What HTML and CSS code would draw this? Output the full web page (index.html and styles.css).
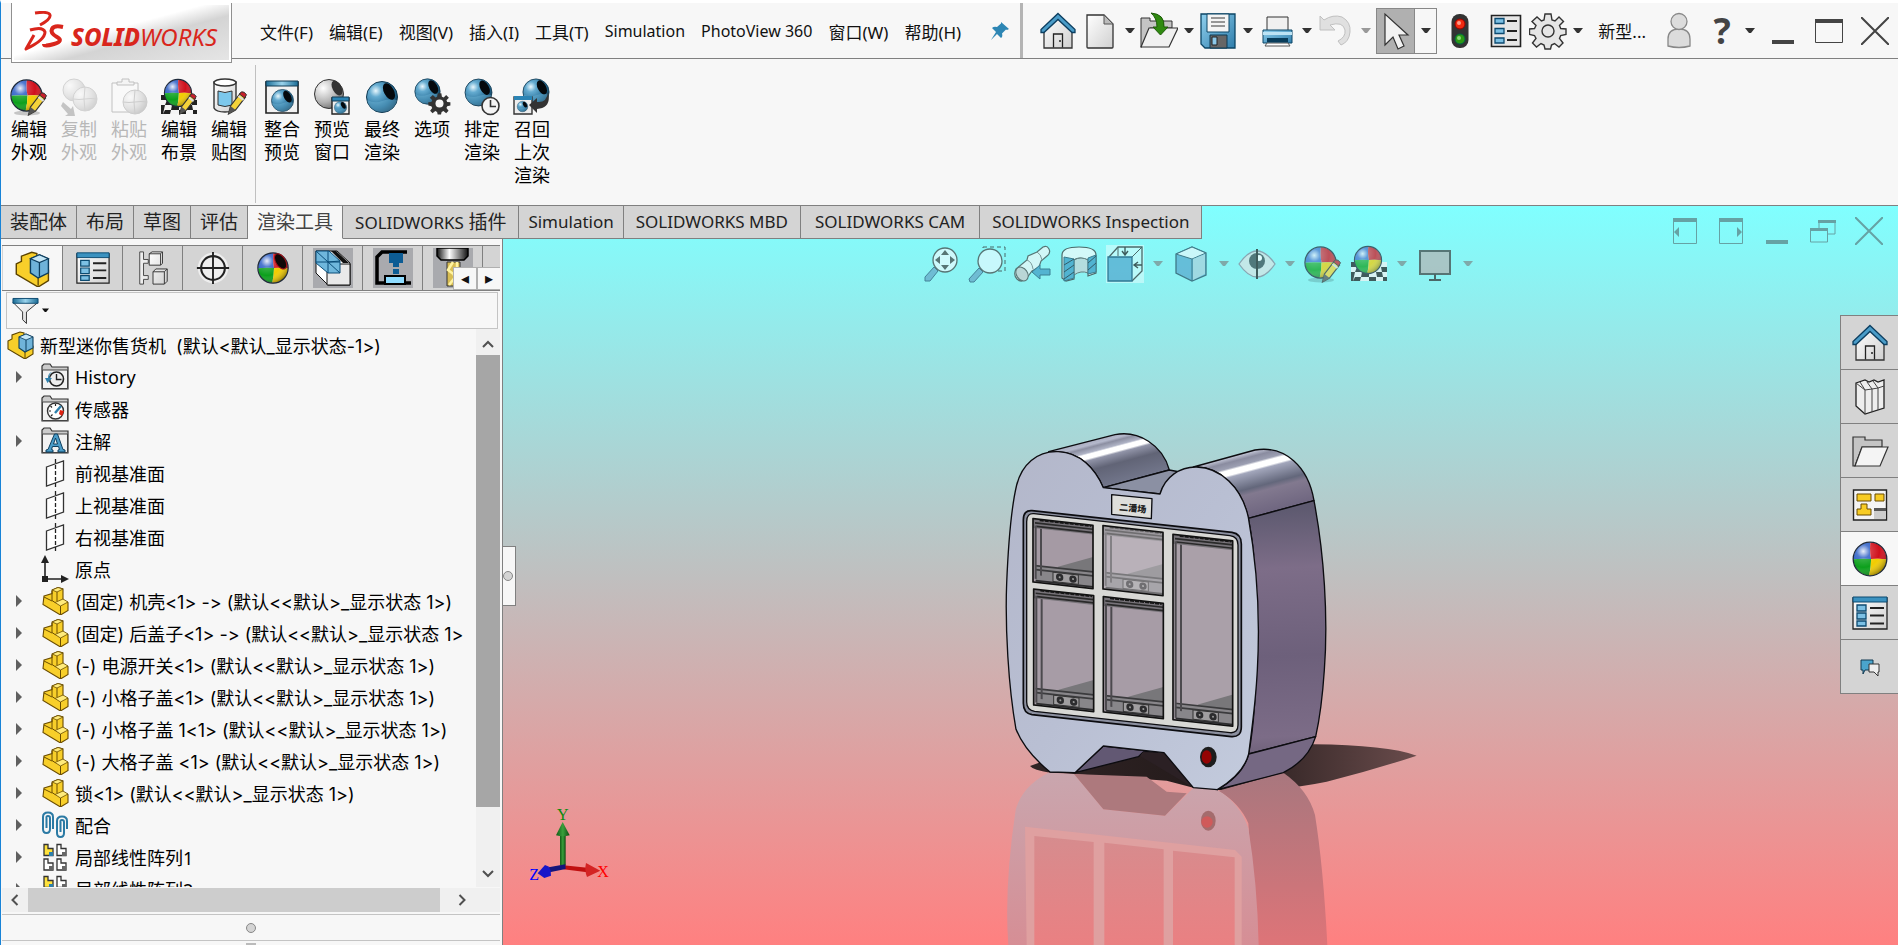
FILE: index.html
```
<!DOCTYPE html>
<html lang="zh-CN">
<head>
<meta charset="utf-8">
<title>SOLIDWORKS</title>
<link rel="stylesheet" href="styles.css">
</head>
<body>
<svg class="defs" aria-hidden="true">
  <defs>
    <linearGradient id="g-paper" x1="0" y1="0" x2="1" y2="1"><stop offset="0" stop-color="#fff"/><stop offset="1" stop-color="#d0d0d0"/></linearGradient>
    <linearGradient id="g-blue" x1="0" y1="0" x2="1" y2="1"><stop offset="0" stop-color="#8fd0ee"/><stop offset="1" stop-color="#2f7dab"/></linearGradient>
    <linearGradient id="g-bar" x1="0" y1="0" x2="1" y2="0"><stop offset="0" stop-color="#1b6d96"/><stop offset=".5" stop-color="#9ad3ec"/><stop offset="1" stop-color="#1b6d96"/></linearGradient>
    <radialGradient id="g-shine" cx=".3" cy=".27" r=".8"><stop offset="0" stop-color="#fff" stop-opacity=".9"/><stop offset=".25" stop-color="#fff" stop-opacity=".2"/><stop offset=".6" stop-color="#fff" stop-opacity="0"/><stop offset="1" stop-color="#000" stop-opacity=".4"/></radialGradient>
    <radialGradient id="g-steel" cx=".3" cy=".3" r=".8"><stop offset="0" stop-color="#e8f7fd"/><stop offset=".25" stop-color="#64abd0"/><stop offset=".7" stop-color="#286f98"/><stop offset="1" stop-color="#123f5b"/></radialGradient>
    <radialGradient id="g-ball" cx=".3" cy=".3" r=".8"><stop offset="0" stop-color="#fff"/><stop offset=".6" stop-color="#b4b4b4"/><stop offset="1" stop-color="#6a6a6a"/></radialGradient>
    <linearGradient id="g-cyl" x1="0" y1="0" x2="1" y2="0"><stop offset="0" stop-color="#111"/><stop offset=".4" stop-color="#fff"/><stop offset="1" stop-color="#111"/></linearGradient>
    <clipPath id="c-ball"><circle cx="19" cy="19" r="15"/></clipPath>
  </defs>
  <symbol id="sphere" viewBox="0 0 38 38">
    <g clip-path="url(#c-ball)"><path d="M0 0h20q-2 10 0 19Q9 18 0 20z" fill="#2458c4"/><path d="M20 0h18v20q-9-2-18-1-2-9 0-19z" fill="#d0101c"/><path d="M0 20q9-2 20-1 0 10-3 19H0z" fill="#0ca01c"/><path d="M20 19q9-1 18 1v18H17q3-9 3-19z" fill="#f2cc00"/></g>
    <circle cx="19" cy="19" r="15.200" fill="url(#g-shine)" stroke="#1f2a3a" stroke-width="1.200"/>
  </symbol>
  <symbol id="steel" viewBox="0 0 38 38">
    <circle cx="19" cy="19" r="15.500" fill="url(#g-steel)" stroke="#123a52"/><path d="M4 22q8 4 15 1t15-1q-3 12-15 12T4 22z" fill="#7cc0e0" opacity=".35"/><ellipse cx="26" cy="13.500" rx="5" ry="9" transform="rotate(-28 26 13.500)" fill="#05090d"/>
  </symbol>
  <symbol id="pencil" viewBox="0 0 20 24"><path d="M1 23l2-8L13 2l5 4L8 19z" fill="#f4d33a" stroke="#333" stroke-width="1.200"/><path d="M12 3l2-2.200q3-.5 5 3L17 7z" fill="#c8202a" stroke="#333"/><path d="M11 5l5 4" stroke="#ddd" stroke-width="2"/><path d="M1 23l2-8 5 4z" fill="#555"/></symbol>
  <symbol id="edit-look" viewBox="0 0 38 38"><ellipse cx="17" cy="35" rx="13" ry="2.500" fill="#000" opacity=".2"/><use href="#sphere" x="-3" y="-2" width="39" height="39"/><use href="#pencil" x="17" y="14" width="21" height="24"/></symbol>
  <symbol id="checker" viewBox="0 0 38 20"><path d="M1 0h36v19H1z" fill="#f4f4f4"/><path d="M1 0h6v5H1zM12 0h6v5h-6zM24 0h6v5h-6zM7 5h6l-1 5H5zM19 5h7v5h-7zM31 5h6v5h-5zM1 10h4l-2 9H1zM12 10h7v5h-8zM26 10h6l1 5h-6zM5 15h6l-1 4H3zM19 15h7v4h-7zM33 15h4v4h-4z" fill="#222"/></symbol>
  <symbol id="scene" viewBox="0 0 38 38"><use href="#checker" x="0" y="17" width="38" height="20"/><use href="#sphere" x="1" y="-2" width="34" height="34"/></symbol>
  <symbol id="edit-scene" viewBox="0 0 38 38"><use href="#scene" width="38" height="38"/><use href="#pencil" x="18" y="15" width="20" height="22"/></symbol>
  <symbol id="decal" viewBox="0 0 38 38"><path d="M4 4v26q2 4 11 4t11-4V4z" fill="url(#g-paper)" stroke="#333" stroke-width="1.400"/><ellipse cx="15" cy="4.500" rx="11" ry="3.500" fill="#fff" stroke="#333" stroke-width="1.400"/><path d="M8 13q7 3 14 0v14q-7 3-14 0z" fill="#7cc8ec" stroke="#333"/><use href="#pencil" x="17" y="13" width="21" height="24"/></symbol>
  <symbol id="copy-look" viewBox="0 0 38 38"><g opacity=".28"><circle cx="14" cy="12" r="11" fill="url(#g-ball)" stroke="#777"/><circle cx="25" cy="21" r="12" fill="url(#g-ball)" stroke="#777"/><path d="M13 21q6 1 12 0t12 0M25 9q-2 12 0 24" stroke="#777" fill="none"/></g><path d="M3 24l8 7 2-3 2 10H5l3-2-7-8z" fill="#c4c4c4"/></symbol>
  <symbol id="paste-look" viewBox="0 0 38 38"><g opacity=".33"><path d="M2 5h26v29H2z" fill="#fff" stroke="#555"/><path d="M7 7V4h5V1h7v3h5v3z" fill="#eee" stroke="#555"/><circle cx="25" cy="24" r="12" fill="url(#g-ball)" stroke="#777"/><path d="M13 24q6 1 12 0t12 0M25 12q-2 12 0 24" stroke="#777" fill="none"/></g></symbol>
  <symbol id="int-preview" viewBox="0 0 38 38"><path d="M3 4h32v31H3z" fill="#f2f2f2" stroke="#222" stroke-width="1.600"/><path d="M3 3h32v5H3z" fill="url(#g-bar)" stroke="#123a52"/><use href="#steel" x="6" y="9" width="27" height="27"/></symbol>
  <symbol id="win-preview" viewBox="0 0 38 38"><circle cx="16" cy="16" r="14.500" fill="url(#g-ball)" stroke="#333"/><ellipse cx="24" cy="10" rx="4.500" ry="8" transform="rotate(-28 24 10)" fill="#333"/><path d="M19 20h17v16H19z" fill="#eee" stroke="#222" stroke-width="1.400"/><path d="M19 19h17v4H19z" fill="#2b84b4" stroke="#123a52"/><use href="#steel" x="20" y="22" width="15" height="15"/></symbol>
  <symbol id="gear" viewBox="0 0 38 38"><path d="M16 2h6l1 6 3 1 4-4 4.500 4.500-4 4 1.200 3 5.300.5v5.500l-5.300 1-1.200 3 3.500 4.500-4 4-4.500-3.500-3 1.500-1 4h-5.500l-1-4-3-1.500-4.500 3.500-4-4 3.500-4.500-1.500-3-5-1V17l5-.5 1.500-3-4-4L8 5l4.500 4 2.500-1z"/><circle cx="19" cy="19" r="6"/></symbol>
  <symbol id="options" viewBox="0 0 38 38"><use href="#steel" x="-1" y="-2" width="31" height="31"/><use href="#gear" x="15" y="14" width="23" height="23" fill="#333"/><circle cx="26.500" cy="25.500" r="4" fill="#f7f7f7"/></symbol>
  <symbol id="schedule" viewBox="0 0 38 38"><use href="#steel" x="-1" y="-2" width="33" height="33"/><circle cx="27.500" cy="28" r="8.500" fill="#f4f4f4" stroke="#333" stroke-width="1.600"/><path d="M27.500 22v6.500H33" fill="none" stroke="#333" stroke-width="1.600"/></symbol>
  <symbol id="recall" viewBox="0 0 38 38"><use href="#steel" x="7" y="-2" width="32" height="32"/><path d="M1 19h18v17H1z" fill="#eee" stroke="#333" stroke-width="1.400"/><path d="M1 18h18v4H1z" fill="#2b84b4"/><use href="#steel" x="3" y="22" width="13" height="13"/><path d="M16 27l8-7v4q10 1 11-10 4 16-11 17v4z" fill="#333"/></symbol>
  <symbol id="home" viewBox="0 0 38 38"><path d="M5 16L19 3l14 14v19H5z" fill="url(#g-paper)" stroke="#333" stroke-width="1.300"/><path d="M14.500 35.500V22h9v13.500M20 29h2" fill="none" stroke="#222" stroke-width="1.300"/><path d="M19 1.500L36 17.500v3h-3L19 7.500 5 20.500H2v-3z" fill="#4a9cc8" stroke="#0c3e60" stroke-width="1.300"/></symbol>
  <symbol id="newdoc" viewBox="0 0 38 38"><path d="M6 3h17l9 9v23q0 1-1 1H7q-1 0-1-1z" fill="url(#g-paper)" stroke="#333" stroke-width="1.300"/><path d="M23 3v9h9z" fill="#bbb" stroke="#555"/></symbol>
  <symbol id="open" viewBox="0 0 38 38"><path d="M1 35V6h9v3h22v7H10L2 35z" fill="#c4c4c4" stroke="#333"/><path d="M9 16h29l-9 19H1z" fill="#f0f0f0" stroke="#333" stroke-width="1.200"/><path d="M11 1q14 1 13 14h4l-7.500 8-7.500-8h4q0-9-6-14z" fill="#2f8a10" stroke="#1c5a08"/></symbol>
  <symbol id="save" viewBox="0 0 38 38"><path d="M2 2h34v34H6l-4-4z" fill="url(#g-blue)" stroke="#0c4666" stroke-width="1.300"/><path d="M8 2h22v18H8z" fill="#f4f4f4" stroke="#0c4666"/><path d="M12 6h14M12 10h14M12 14h14" stroke="#777" stroke-width="1.300"/><path d="M11 23h17v13H11z" fill="#666" stroke="#0c3a54"/><path d="M13 25h5v8h-5z" fill="#8cc8e8" stroke="#222"/></symbol>
  <symbol id="print" viewBox="0 0 38 38"><path d="M9 5h21v15H9z" fill="#f0f0f0" stroke="#333"/><path d="M5 18h29v13H5z" fill="url(#g-blue)" stroke="#0c4666"/><path d="M5 20h29v3H5z" fill="#bde3f4"/><path d="M9 26h21v4H9z" fill="#083c5a"/><path d="M9 31h21l2 3H7z" fill="#fff" stroke="#555"/></symbol>
  <symbol id="undo" viewBox="0 0 38 38"><path d="M3 4l4 4Q16 2 25 5q9 5 8 15-1 10-9 13l-3-4q8-4 7-11-2-9-15-5l5 5H3z" fill="#e0e0e0" stroke="#c0c0c0"/></symbol>
  <symbol id="cursor" viewBox="0 0 38 38"><path d="M8 2v31l8-8 5 12 6-3-5-11h9z" fill="#f2f2f2" stroke="#333" stroke-width="1.200"/></symbol>
  <symbol id="traffic" viewBox="0 0 38 38"><rect x="10.500" y="2" width="17" height="34" rx="8" fill="#333"/><circle cx="19" cy="12" r="5" fill="#f02a10" stroke="#900"/><circle cx="19" cy="27" r="5" fill="#2c9a14" stroke="#064"/><circle cx="18" cy="11" r="2" fill="#ff9a88"/><circle cx="18" cy="26" r="2" fill="#8ad878"/></symbol>
  <symbol id="props" viewBox="0 0 38 38"><path d="M4.500 3.500h29v31h-29z" fill="#e6e6e6" stroke="#222" stroke-width="1.600"/><path d="M8 6.500h9v5H8zM8 16.500h9v5H8zM8 26h9v5H8z" fill="#7cc0e4" stroke="#0c4a70" stroke-width="1.300"/><path d="M20 9h10M20 19h10M20 28h10" stroke="#222" stroke-width="2"/></symbol>
  <symbol id="user" viewBox="0 0 38 38"><path d="M8 34V27q0-10 11-10t11 10v7q-11 3-22 0z" fill="#dcdcdc" stroke="#888" stroke-width="1.300"/><circle cx="19" cy="9.500" r="8" fill="#dcdcdc" stroke="#888" stroke-width="1.300"/></symbol>
  <symbol id="pin" viewBox="0 0 20 20"><path d="M11 1l8 7-2 1-1-.5-4 4q1 3-1 4.500l-4-4-6 6 5-8-4-4q2-2 5-1l4-3.500z" fill="#2d86b4"/></symbol>
  <symbol id="part" viewBox="0 0 28 28"><path d="M3 9l8-2.500V3l6-2.500L22 2v11l5 2.500v8L19.500 28 2 17.500z" fill="#f8cf2a" stroke="#6a4c00" stroke-width="1.100"/><path d="M11 3l5 2 6-3-5-1.500z" fill="#ffeb7c" stroke="#6a4c00" stroke-width=".8"/><path d="M14 15.500L22 12l5 3-7.500 4z" fill="#ffeb7c" stroke="#6a4c00" stroke-width=".8"/><path d="M11 4v9.500l3 2M16 5v9M3 10l8 4M19.500 19v9" fill="none" stroke="#6a4c00"/></symbol>
  <symbol id="asm" viewBox="0 0 28 28"><path d="M1 10l4-2V4l8-3 4 1v9l9 4v8l-8 5L1 18z" fill="#f8cf2a" stroke="#5c4400" stroke-width="1.100"/><path d="M18 19v8" stroke="#5c4400"/><path d="M12 6l7-3 7 3v11l-8 4-6-4z" fill="#6fb3d9" stroke="#0d3e5e" stroke-width="1.100"/><path d="M12 6l7 3 7-3-7-3z" fill="#c4e6f6" stroke="#0d3e5e" stroke-width=".8"/><path d="M19 9v11" stroke="#0d3e5e"/></symbol>
  <symbol id="window-list" viewBox="0 0 38 38"><path d="M2 4h34v31H2z" fill="url(#g-paper)" stroke="#222" stroke-width="1.300"/><path d="M2 3h34v5H2z" fill="#3b92c0" stroke="#0c4a70"/><path d="M6 11h9v6H6zM6 19h9v6H6zM6 27h9v5H6z" fill="#7cc0e4" stroke="#0c4a70" stroke-width="1.300"/><path d="M19 14h14M19 21.500h14M19 29.500h14" stroke="#222" stroke-width="2"/></symbol>
  <symbol id="config" viewBox="0 0 38 38"><path d="M5 2h4v8h5v4H9v13h5v4H9v5H5z" fill="#eee" stroke="#444"/><path d="M15 4l3-2h11v12l-2 2H15zM19 23l3-3h12v13l-3 3H19z" fill="url(#g-paper)" stroke="#333"/><path d="M15 4h12v12M27 4l2-2M19 23h12v13M31 23l3-3" stroke="#333" fill="none"/></symbol>
  <symbol id="target" viewBox="0 0 38 38"><circle cx="19" cy="19" r="16" fill="#eee"/><circle cx="19" cy="19" r="12.500" fill="none" stroke="#222" stroke-width="2.200"/><path d="M19 2v34M2 19h34" stroke="#222" stroke-width="2"/></symbol>
  <symbol id="display-mgr" viewBox="0 0 38 38"><use href="#sphere" x="-1" y="-1" width="40" height="40"/><ellipse cx="27" cy="12" rx="5" ry="9" transform="rotate(-32 27 12)" fill="#100808" stroke="#a01018"/></symbol>
  <symbol id="block" viewBox="0 0 40 40"><path d="M0 0h40v40H0z" fill="#a9aaae"/><path d="M3 3h21l13 12v22H15L3 25z" fill="#fff" stroke="#111"/><path d="M14 16h23v21H14z" fill="#e9e9e9" stroke="#111"/><path d="M18 3l5 0 13 12h-6z" fill="#111"/><path d="M3 3h13l11 10v12H15L3 15z" fill="#6fb7dc" stroke="#0a4d78"/><path d="M3 3l24 22M15 3v22M3 14h24M15 14l12-1" stroke="#0a4d78"/></symbol>
  <symbol id="clamp" viewBox="0 0 40 40"><path d="M0 0h40v40H0z" fill="#a9aaae"/><path d="M34 4H9L4 9v26h34" fill="none" stroke="#000" stroke-width="3.500"/><path d="M16 5h14v10h-4v4h-6v-4h-4zM20 21h6v5h-6z" fill="#0d5c94"/><path d="M12 28h20v8H12z" fill="#8fdcff" stroke="#000" stroke-width="2"/></symbol>
  <symbol id="mill" viewBox="0 0 40 40"><path d="M0 0h40v40H0z" fill="#a9aaae"/><path d="M4 0h31v8l-4 4H8L4 8z" fill="url(#g-cyl)" stroke="#000" stroke-width="1.500"/><path d="M14 14h13v24H14z" fill="#d8bd54" stroke="#333"/><path d="M20 14l-5 8 8 6-7 9M24 14v8l-3 5 5 5" fill="none" stroke="#fff3a0" stroke-width="2.500"/></symbol>
  <symbol id="funnel" viewBox="0 0 28 28"><path d="M1 5l10 10v8l4 4V15L27 5z" fill="url(#g-paper)" stroke="#333"/><path d="M1 1h26v5H1z" fill="url(#g-bar)" stroke="#0c4a70"/></symbol>
  <symbol id="folder" viewBox="0 0 28 28"><path d="M1 26V3l2-2h6l2 3h16v22z" fill="#ccc" stroke="#333" stroke-width="1.200"/><path d="M1.500 7h25v18.500h-25z" fill="#f2f2f2" stroke="#444"/></symbol>
  <symbol id="history" viewBox="0 0 28 28"><use href="#folder" width="28" height="28"/><circle cx="15.500" cy="16" r="7" fill="#eee" stroke="#222" stroke-width="1.600"/><path d="M15.500 11v5.500h5" fill="none" stroke="#222" stroke-width="1.400"/><path d="M11 9q-4 3-2 6h2l-4.500 5L4 15h3q0-5 4-6z" fill="#2e80ac"/></symbol>
  <symbol id="sensor" viewBox="0 0 28 28"><use href="#folder" width="28" height="28"/><circle cx="14.500" cy="16" r="8" fill="#fff" stroke="#333" stroke-width="1.400"/><path d="M19 15l4 1-2 5-3-2z" fill="#e02010"/><path d="M14 18l6-7" stroke="#2e80ac" stroke-width="2.400"/><path d="M8 16h2M14.500 9v2M9.500 11l1.500 1.500M10 21l1.500-1.500" stroke="#222" stroke-width="1.200"/></symbol>
  <symbol id="notes" viewBox="0 0 28 28"><use href="#folder" width="28" height="28"/><path d="M5 25v-2l2-.500L13.500 7h3L22 22.500l2 .500v2h-7v-2l1.500-.500-1-3h-6l-1 3 1.500.500v2zM12.500 17h4l-2-6z" fill="#4a9cc8" stroke="#0d3e5e"/></symbol>
  <symbol id="plane" viewBox="0 0 28 28"><path d="M5.500 8l17-6v19l-17 6z" fill="#fff" stroke="#333" stroke-width="1.300"/><path d="M14.500 0v28" stroke="#222" stroke-width="1.300" stroke-dasharray="4 2"/></symbol>
  <symbol id="origin" viewBox="0 0 28 28"><path d="M4 4v20h18" fill="none" stroke="#222" stroke-width="1.600"/><path d="M0 8l4-8 4 8zM20 20l8 4-8 4zM1 21h6v6H1z" fill="#222"/></symbol>
  <symbol id="mates" viewBox="0 0 28 28"><g fill="none" stroke="#2b7aa4" stroke-width="2"><path d="M2 9v9q0 4 3.500 4T9 18V7q0-2-2-2T5.500 7v10M2 9V6q0-4.500 5-4.500T12 6v12"/><path d="M16 13v9q0 4 3.500 4t3.500-4V11q0-2-2-2t-1.500 2v10M16 13v-3q0-4.500 5-4.500t5 4.500v8"/></g></symbol>
  <symbol id="pattern" viewBox="0 0 28 28"><g stroke="#333" fill="#fff" stroke-width="1.300"><path d="M3 1.500h4v4h5v7H3z" fill="#ffe23c"/><path d="M16 1.500h4v4h5v7h-9zM3 16h4v4h5v7H3zM16 16h4v4h5v7h-9z"/></g><path d="M8 9h4v4H8z" fill="#2e80ac"/><path d="M21 9h4v4h-4zM8 23h4v4H8zM21 23h4v4h-4z" fill="#666"/></symbol>
  <symbol id="zoom-fit" viewBox="0 0 38 38"><path d="M3 32l9-10 4 4-8 10H3z" fill="#64a8c8" stroke="#2a5a78"/><circle cx="23" cy="15" r="12" fill="#e8fbff" stroke="#444" stroke-width="1.300"/><path d="M23 5l4 5h-8zM23 25l4-5h-8zM13 15l5-4v8zM33 15l-5-4v8z" fill="#444"/></symbol>
  <symbol id="zoom-area" viewBox="0 0 38 38"><path d="M15 2h22v24H15z" fill="none" stroke="#333" stroke-dasharray="4 3"/><path d="M1 34l10-11 4 4-9 10H2z" fill="#64a8c8" stroke="#2a5a78"/><circle cx="22" cy="16" r="12" fill="#dffaff" stroke="#444" stroke-width="1.300"/></symbol>
  <symbol id="prev-view" viewBox="0 0 38 38"><path d="M2 24l11-9 1-4 9-4 6-5q4-2 6 2t-2 7l-6 5-2 6-7 4-6 8q-5 4-9 0t-1-10z" fill="#eef8f8" stroke="#444" stroke-width="1.200"/><path d="M13 15q5 2 6 9M23 7q4 2 5 8" fill="none" stroke="#777"/><ellipse cx="8" cy="29" rx="5.500" ry="7.500" transform="rotate(-35 8 29)" fill="#ccc" stroke="#444"/><path d="M18 27l8-7v4h10v6H26v4z" fill="#3f9cc4" stroke="#1c5470"/></symbol>
  <symbol id="section" viewBox="0 0 38 38"><path d="M2 10q0-8 17-8t17 8v18l-8 3V15q-9-4-14 0v19l-8 2-4-3z" fill="#f0fafa" stroke="#333" stroke-width="1.200"/><path d="M14 15q7-4 14 0v13q-7-3-14 2z" fill="#c4d4d6" stroke="#555"/><path d="M4 12l10 2v19l-10 3zM28 13l8-3v17l-8 2z" fill="#3c9bc4" stroke="#1d4e66"/><path d="M4 20l10-6M4 27l10-7M4 34l10-7M28 18l8-7M28 25l8-7" stroke="#123" /></symbol>
  <symbol id="orient" viewBox="0 0 38 38"><path d="M0 0h38v38H0z" fill="#e8ffff" opacity=".7"/><path d="M3 12L12 2h24v24L26 36" fill="none" stroke="#333" stroke-width="1.300"/><path d="M26 12L36 2M12 2v9" stroke="#333"/><path d="M2 12h24v24H2z" fill="#54a8cf" stroke="#0c4a70" stroke-width="1.300"/><path d="M19 2v7m-3-3l3 4 3-4M36 20h-7m3-3l-4 3 4 3" stroke="#222" stroke-width="1.400" fill="none"/></symbol>
  <symbol id="cube" viewBox="0 0 38 38"><path d="M4 9l16-7 14 6v22l-14 6-16-8z" fill="#58a9cf" stroke="#234c60" stroke-width="1.300"/><path d="M4 9l16 5 14-6-14-6z" fill="#e4f7fb" stroke="#234c60"/><path d="M20 14v22" stroke="#234c60"/><path d="M21 14l12-5v20l-12 6z" fill="#a8d0dc"/></symbol>
  <symbol id="eye" viewBox="0 0 38 38"><path d="M1 19Q10 6 19 6t18 13Q28 32 19 32T1 19z" fill="#d8e4e4" stroke="#889" stroke-width="1.300"/><circle cx="19" cy="16" r="8" fill="#3b4a4e"/><circle cx="21" cy="13" r="3" fill="#fff"/><path d="M19 4v30" stroke="#222" stroke-width="2"/></symbol>
  <symbol id="monitor" viewBox="0 0 38 38"><path d="M4 6h30v23H4z" fill="#b4b4b4" stroke="#444" stroke-width="2"/><path d="M19 29v5M13 35h12" stroke="#333" stroke-width="2"/></symbol>
  <symbol id="books" viewBox="0 0 38 38"><path d="M5 5l9-3 4 2 5-2 4 2 6-2v28l-19 6L5 28z" fill="#eee" stroke="#222" stroke-width="1.300"/><path d="M5 5l9 7v24M14 12l7-1 0 23M14 12L9 4M21 11l6-1v22M21 11l-5-7M27 10l6-2M27 10l-5-7" stroke="#444" fill="none"/></symbol>
  <symbol id="files" viewBox="0 0 38 38"><path d="M2 34V5h12v3h17v7H11L4 34z" fill="#c4c4c4" stroke="#333" stroke-width="1.200"/><path d="M11 15h26l-8 19H4z" fill="#f4f4f4" stroke="#333" stroke-width="1.200"/></symbol>
  <symbol id="palette" viewBox="0 0 38 38"><path d="M2.500 4h33v30h-33z" fill="#f4f4f4" stroke="#222" stroke-width="1.400"/><path d="M6 8h14v7H6zM24 8h9v7h-9zM6 29v-6h4v-5h6v5h4v6z" fill="#f7cc24" stroke="#6a4c00"/><path d="M23 23h12v10H23z" fill="#ccc"/><path d="M23 22h12v3H23z" fill="#555"/></symbol>
  <symbol id="chat" viewBox="0 0 38 38"><path d="M10 12h12v10h-8l-2 4v-4h-2z" fill="#4aa4cc" stroke="#123a52"/><path d="M18 16h10v8h-1v4l-4-4h-5z" fill="#eee" stroke="#333"/></symbol>
  <symbol id="caret" viewBox="0 0 10 6"><path d="M0 0h10L6 5H4z" fill="currentColor"/></symbol>
  <symbol id="close" viewBox="0 0 28 28"><path d="M0 0l28 28M28 0L0 28" stroke="currentColor" stroke-width="2"/></symbol>
</svg>

<div class="app">
  <header class="topbar">
    <div class="brand">
      <svg class="brand-mark" viewBox="0 0 42 40" aria-hidden="true"><g fill="none" stroke="#d9261c" stroke-linejoin="round"><path d="M13 2q14-2 15 2t-10 10" stroke-width="3"/><path d="M8 19q13-4 15 2 0 8-19 17l8-14" stroke-width="3"/><path d="M41 16q-9-2-11 2t5 8-3 7-10 0" stroke-width="4"/></g></svg>
      <span class="brand-name"><b>SOLID</b>WORKS</span>
    </div>
    <nav class="menu" aria-label="主菜单">
      <button>文件(F)</button><button>编辑(E)</button><button>视图(V)</button><button>插入(I)</button><button>工具(T)</button><button class="latin">Simulation</button><button class="latin">PhotoView 360</button><button>窗口(W)</button><button>帮助(H)</button>
    </nav>
    <button class="pin" aria-label="固定菜单"><svg><use href="#pin"/></svg></button>
    <div class="quick">
      <button class="q home" aria-label="主页"><svg><use href="#home"/></svg></button>
      <button class="q" aria-label="新建"><svg><use href="#newdoc"/></svg></button><button class="dd" aria-label="新建选项"><svg><use href="#caret"/></svg></button>
      <button class="q" aria-label="打开"><svg><use href="#open"/></svg></button><button class="dd" aria-label="打开选项"><svg><use href="#caret"/></svg></button>
      <button class="q" aria-label="保存"><svg><use href="#save"/></svg></button><button class="dd" aria-label="保存选项"><svg><use href="#caret"/></svg></button>
      <button class="q" aria-label="打印"><svg><use href="#print"/></svg></button><button class="dd" aria-label="打印选项"><svg><use href="#caret"/></svg></button>
      <button class="q" aria-label="撤销" disabled><svg><use href="#undo"/></svg></button><button class="dd" aria-label="撤销选项" disabled><svg><use href="#caret"/></svg></button>
      <div class="select-tool"><button class="q" aria-label="选择"><svg><use href="#cursor"/></svg></button><button class="dd" aria-label="选择选项"><svg><use href="#caret"/></svg></button></div>
      <button class="q wide" aria-label="重建模型"><svg><use href="#traffic"/></svg></button>
      <button class="q wide" aria-label="文件属性"><svg><use href="#props"/></svg></button>
      <button class="q" aria-label="选项"><svg class="outline-gear"><use href="#gear"/></svg></button><button class="dd" aria-label="选项菜单"><svg><use href="#caret"/></svg></button>
      <span class="docname">新型...</span>
      <button class="q wide" aria-label="用户"><svg><use href="#user"/></svg></button>
      <button class="help" aria-label="帮助">?</button><button class="dd" aria-label="帮助选项"><svg><use href="#caret"/></svg></button>
      <div class="winctl">
        <button aria-label="最小化"><svg viewBox="0 0 28 28"><path d="M3 23h22v4H3z" fill="currentColor"/></svg></button>
        <button aria-label="最大化"><svg viewBox="0 0 28 28"><path d="M.500 3v22.500h27V3z" fill="none" stroke="currentColor"/><path d="M0 2h28v4H0z" fill="currentColor"/></svg></button>
        <button aria-label="关闭"><svg><use href="#close"/></svg></button>
      </div>
    </div>
  </header>

  <section class="ribbon" aria-label="渲染工具">
    <div class="group">
      <button class="tool"><svg><use href="#edit-look"/></svg>编辑<br>外观</button>
      <button class="tool" disabled><svg><use href="#copy-look"/></svg>复制<br>外观</button>
      <button class="tool" disabled><svg><use href="#paste-look"/></svg>粘贴<br>外观</button>
      <button class="tool"><svg><use href="#edit-scene"/></svg>编辑<br>布景</button>
      <button class="tool"><svg><use href="#decal"/></svg>编辑<br>贴图</button>
    </div>
    <div class="group">
      <button class="tool"><svg><use href="#int-preview"/></svg>整合<br>预览</button>
      <button class="tool"><svg><use href="#win-preview"/></svg>预览<br>窗口</button>
      <button class="tool"><svg><use href="#steel"/></svg>最终<br>渲染</button>
      <button class="tool"><svg><use href="#options"/></svg>选项</button>
      <button class="tool"><svg><use href="#schedule"/></svg>排定<br>渲染</button>
      <button class="tool"><svg><use href="#recall"/></svg>召回<br>上次<br>渲染</button>
    </div>
  </section>

  <main class="work">
    <nav class="tabs" aria-label="命令管理器">
      <button class="han">装配体</button><button class="han">布局</button><button class="han">草图</button><button class="han">评估</button><button class="han active">渲染工具</button><button>SOLIDWORKS <span class="big-han">插件</span></button><button class="snug">Simulation</button><button>SOLIDWORKS MBD</button><button class="roomy">SOLIDWORKS CAM</button><button>SOLIDWORKS Inspection</button>
    </nav>

    <aside class="side">
      <div class="side-tabs">
        <button class="active" aria-label="设计树"><svg><use href="#asm"/></svg></button><button aria-label="属性"><svg><use href="#window-list"/></svg></button><button aria-label="配置"><svg><use href="#config"/></svg></button><button aria-label="尺寸专家"><svg><use href="#target"/></svg></button><button aria-label="外观"><svg><use href="#display-mgr"/></svg></button><button aria-label="CAM 特征树"><svg class="big"><use href="#block"/></svg></button><button aria-label="CAM 操作树"><svg class="big"><use href="#clamp"/></svg></button><button aria-label="CAM 刀具树"><svg class="big"><use href="#mill"/></svg></button>
        <div class="pager"><button aria-label="上一页">&#9666;</button><button aria-label="下一页">&#9656;</button></div>
      </div>
      <button class="filter" aria-label="过滤器"><svg class="fun"><use href="#funnel"/></svg><svg class="car"><use href="#caret"/></svg></button>
      <div class="tree-wrap">
        <ul class="tree">
          <li class="root"><svg><use href="#asm"/></svg><span class="state">新型迷你售货机&nbsp; (默认&lt;默认_显示状态-1&gt;)</span></li>
          <li class="exp"><svg><use href="#history"/></svg><span>History</span></li>
          <li><svg><use href="#sensor"/></svg><span>传感器</span></li>
          <li class="exp"><svg><use href="#notes"/></svg><span>注解</span></li>
          <li><svg><use href="#plane"/></svg><span>前视基准面</span></li>
          <li><svg><use href="#plane"/></svg><span>上视基准面</span></li>
          <li><svg><use href="#plane"/></svg><span>右视基准面</span></li>
          <li><svg><use href="#origin"/></svg><span>原点</span></li>
          <li class="exp"><svg><use href="#part"/></svg><span class="state">(固定) 机壳&lt;1&gt; -&gt; (默认&lt;&lt;默认&gt;_显示状态 1&gt;)</span></li>
          <li class="exp"><svg><use href="#part"/></svg><span class="state">(固定) 后盖子&lt;1&gt; -&gt; (默认&lt;&lt;默认&gt;_显示状态 1&gt;</span></li>
          <li class="exp"><svg><use href="#part"/></svg><span class="state">(-) 电源开关&lt;1&gt; (默认&lt;&lt;默认&gt;_显示状态 1&gt;)</span></li>
          <li class="exp"><svg><use href="#part"/></svg><span class="state">(-) 小格子盖&lt;1&gt; (默认&lt;&lt;默认&gt;_显示状态 1&gt;)</span></li>
          <li class="exp"><svg><use href="#part"/></svg><span class="state">(-) 小格子盖 1&lt;1&gt; (默认&lt;&lt;默认&gt;_显示状态 1&gt;)</span></li>
          <li class="exp"><svg><use href="#part"/></svg><span class="state">(-) 大格子盖 &lt;1&gt; (默认&lt;&lt;默认&gt;_显示状态 1&gt;)</span></li>
          <li class="exp"><svg><use href="#part"/></svg><span class="state">锁&lt;1&gt; (默认&lt;&lt;默认&gt;_显示状态 1&gt;)</span></li>
          <li class="exp"><svg><use href="#mates"/></svg><span>配合</span></li>
          <li class="exp"><svg><use href="#pattern"/></svg><span>局部线性阵列1</span></li>
          <li class="exp"><svg><use href="#pattern"/></svg><span>局部线性阵列2</span></li>
        </ul>
        <div class="vbar"><svg viewBox="0 0 12 8"><path d="M1 7l5-5 5 5"/></svg><div class="vtrack"><div class="vthumb"></div></div><svg viewBox="0 0 12 8"><path d="M1 1l5 5 5-5"/></svg></div>
      </div>
      <div class="hbar"><svg viewBox="0 0 8 12"><path d="M7 1L2 6l5 5"/></svg><div class="hthumb"></div><svg viewBox="0 0 8 12"><path d="M1 1l5 5-5 5"/></svg></div>
      <div class="splitter"><i class="knob"></i></div>
      <div class="stub"></div>
    </aside>

    <section class="view" aria-label="图形区域">
      <svg class="model" viewBox="0 0 1350 1605" aria-label="新型迷你售货机">
        <defs>
          <linearGradient id="m-front" x1="0" y1="0" x2="1" y2="1"><stop offset="0" stop-color="#b3b7ca"/><stop offset=".5" stop-color="#b9bfd3"/><stop offset="1" stop-color="#c3cbdd"/></linearGradient>
          <linearGradient id="m-side" gradientUnits="userSpaceOnUse" x1="860" y1="300" x2="900" y2="1100"><stop offset="0" stop-color="#5e5a70"/><stop offset=".22" stop-color="#7d6d88"/><stop offset=".55" stop-color="#6d607b"/><stop offset=".85" stop-color="#7c6c87"/><stop offset="1" stop-color="#5d5468"/></linearGradient>
          <linearGradient id="m-roll" gradientUnits="userSpaceOnUse" x1="760" y1="120" x2="813" y2="320"><stop offset="0" stop-color="#a5a8bb"/><stop offset=".1" stop-color="#b9bccd"/><stop offset=".16" stop-color="#8a8ca0"/><stop offset=".24" stop-color="#9c9fb2"/><stop offset=".27" stop-color="#fff"/><stop offset=".34" stop-color="#fff"/><stop offset=".37" stop-color="#a2a6bb"/><stop offset=".6" stop-color="#63677b"/><stop offset=".68" stop-color="#82798f"/><stop offset="1" stop-color="#6f6680"/></linearGradient>
          <linearGradient id="m-roll2" gradientUnits="userSpaceOnUse" x1="330" y1="85" x2="370" y2="235"><stop offset="0" stop-color="#a5a8bb"/><stop offset=".12" stop-color="#b4b8cb"/><stop offset=".17" stop-color="#8c8fa2"/><stop offset=".26" stop-color="#b0b4c6"/><stop offset=".29" stop-color="#fff"/><stop offset=".37" stop-color="#fff"/><stop offset=".41" stop-color="#9194a8"/><stop offset=".6" stop-color="#616476"/><stop offset="1" stop-color="#73778c"/></linearGradient>
          <linearGradient id="m-ref" x1="0" y1="0" x2="0" y2="1"><stop offset="0" stop-color="#c9a6ae"/><stop offset="1" stop-color="#d68e95"/></linearGradient>
          <linearGradient id="m-refs" x1="0" y1="0" x2="0" y2="1"><stop offset="0" stop-color="#a8777e"/><stop offset="1" stop-color="#de7478"/></linearGradient>
          <linearGradient id="m-refc" x1="0" y1="0" x2="0" y2="1"><stop offset="0" stop-color="#d68c8e"/><stop offset="1" stop-color="#ea8082"/></linearGradient>
          <linearGradient id="m-shadow" x1="0" y1="0" x2="1" y2="0"><stop offset="0" stop-color="#302425"/><stop offset=".5" stop-color="#231a1a"/><stop offset="1" stop-color="#6a4c4c"/></linearGradient>
          <g id="cell-top"><path d="M0 0h180v28H0z" fill="#777379"/><path d="M6 12h174M10 22h170" stroke="#2a2a2a" stroke-width="5"/><path d="M20 3h155" stroke="#181818" stroke-width="5" stroke-dasharray="12 3"/></g>
          <g id="cell-base"><path d="M75-54L180-95v55L75-46z" fill="#78777a"/><path d="M8-50h172v48H8z" fill="#88868a"/><path d="M6-50h174M8-38h172" stroke="#3b3b3d" stroke-width="5"/><path d="M8-5h172" stroke="#2c2c2e" stroke-width="5"/><path d="M60-36h76v28H60z" fill="#a09ea0" stroke="#333" stroke-width="3"/><circle cx="80" cy="-23" r="11" fill="#2c2c2e"/><circle cx="120" cy="-22" r="11" fill="#2c2c2e"/><circle cx="80" cy="-23" r="3" fill="#999"/><circle cx="120" cy="-22" r="3" fill="#999"/></g>
        </defs>
        <path d="M150 1068L200 1050 1000 1003Q1220 1005 1310 1037 1180 1080 1040 1115 880 1148 720 1140L640 1133 560 1112 280 1092 210 1088Q160 1080 150 1068z" fill="url(#m-shadow)"/>
        <g>
          <path d="M910 1088Q985 1140 1005 1215 1030 1370 1042 1605H830L805 1240Q780 1180 715 1142z" fill="url(#m-refs)"/>
          <path d="M205 1088L282 1092 370 1198 555 1217 640 1134 712 1140Q780 1180 805 1255 832 1420 836 1605H85Q72 1430 107 1200 125 1130 205 1088z" fill="url(#m-ref)"/>
          <path d="M282 1092L500 1100 560 1145 620 1150 555 1217 370 1198z" fill="#ad797d"/>
          <path d="M135 1250L765 1320 785 1340V1605H140z" fill="#dfa0a0"/>
          <path d="M163 1278l178 18v309H163zM373 1298l178 20v287H373zM579 1322l185 20v263H579z" fill="url(#m-refc)"/>
          <ellipse cx="685" cy="1232" rx="22" ry="30" fill="#a46c6d"/><circle cx="681" cy="1236" r="17" fill="#d05a5a"/>
        </g>
        <g stroke="#0c0c10" stroke-width="4" stroke-linejoin="round">
          <path d="M285 1088L370 1008 552 1028 490 1026 475 1040z" fill="#625873"/>
          <path d="M490 1026L552 1028 640 1133 480 1038z" fill="#2b2024" stroke="none"/>
          <path d="M206 125L405 74C475 60 548 105 568 180L370 233C345 175 300 128 235 125z" fill="url(#m-roll2)"/>
          <path d="M370 233L568 180 600 186Q555 208 540 252z" fill="#8b90a3"/>
          <path d="M640 171L825 120C915 105 985 170 1002 272L805 325C785 230 720 173 650 171z" fill="url(#m-roll)"/>
          <path d="M805 325L1002 272C1032 430 1045 620 1033 780Q1025 900 1007 980L806 1032C835 880 842 500 805 325z" fill="url(#m-side)"/>
          <path d="M806 1032L1007 980Q985 1050 910 1088L712 1139Q790 1095 806 1032z" fill="#756883"/>
          <path d="M110 225C125 165 170 122 235 125 300 128 345 175 370 233L540 252C555 200 600 170 650 171 720 173 785 230 805 322 830 460 842 600 832 780 827 880 815 960 806 1032 795 1075 760 1110 712 1139L640 1133 552 1028 370 1008 285 1088 210 1086C160 1045 125 1000 108 958 85 830 75 650 80 520 85 400 92 300 110 225z" fill="url(#m-front)"/>
          <path d="M156 302L756 367Q784 371 784 402V950Q784 982 754 980L156 914Q130 910 130 880V330Q130 300 156 302z" fill="#8b8f9f" stroke-width="5"/>
          <path d="M162 311L750 377Q774 380 774 405V945Q774 970 750 968L164 904Q140 900 140 876V335Q140 309 162 311z" fill="#d8d8d5"/>
          <path d="M395 254l121 12-2 60-119-13z" fill="#dededb"/>
        </g>
        <text class="plate" x="417" y="301" transform="rotate(5 417 301)">二潘场</text>
        <g stroke-linejoin="round">
          <g transform="translate(159 326) skewY(6.300)"><path d="M0 0h180v190H0z" fill="#a59aa4"/><use href="#cell-top"/><use href="#cell-base" y="190"/><path d="M8 20v160M24 28v140" stroke="#4c4a4e" stroke-width="6"/><path d="M0 0h180v190H0z" fill="none" stroke="#111" stroke-width="5"/></g>
          <g transform="translate(369 347) skewY(6.300)"><path d="M0 0h180v190H0z" fill="#a59aa4"/><use href="#cell-top"/><use href="#cell-base" y="190"/><path d="M8 20v160M24 28v140" stroke="#4c4a4e" stroke-width="6"/><path d="M0 0h180v190H0z" fill="#d8d4da" fill-opacity=".4" stroke="#111" stroke-width="5"/></g>
          <g transform="translate(161 537) skewY(6.300)"><path d="M0 0h180v348H0z" fill="#a79ca6"/><use href="#cell-top"/><use href="#cell-base" y="348"/><path d="M8 20v320M24 28v300" stroke="#4c4a4e" stroke-width="6"/><path d="M0 0h180v348H0z" fill="none" stroke="#111" stroke-width="5"/></g>
          <g transform="translate(370 560) skewY(6.300)"><path d="M0 0h180v346H0z" fill="#a79ca6"/><use href="#cell-top"/><use href="#cell-base" y="346"/><path d="M8 20v320M24 28v300" stroke="#4c4a4e" stroke-width="6"/><path d="M0 0h180v346H0z" fill="none" stroke="#111" stroke-width="5"/></g>
          <g transform="translate(579 373) skewY(6.300)"><path d="M0 0h179v556H0z" fill="#aaa0a9"/><use href="#cell-top"/><use href="#cell-base" y="556"/><path d="M8 20v530M24 28v500" stroke="#4c4a4e" stroke-width="6"/><path d="M0 0h179v556H0z" fill="none" stroke="#111" stroke-width="5"/></g>
        </g>
        <ellipse cx="685" cy="1041" rx="25" ry="31" fill="#1d1d1d"/><ellipse cx="680" cy="1041" rx="15" ry="20" fill="#940404"/>
      </svg>

      <svg class="triad" viewBox="9 0 381 300" aria-label="坐标轴">
        <defs><linearGradient id="t-g" x1="0" y1="0" x2="1" y2="0"><stop offset="0" stop-color="#125a16"/><stop offset=".5" stop-color="#3aa03c"/><stop offset="1" stop-color="#0f4a12"/></linearGradient></defs>
        <path d="M180 135h17v92h-17z" fill="url(#t-g)"/><path d="M188 96l21 40q-21 6-41 0z" fill="url(#t-g)"/>
        <path d="M190 226l72 7v14l-72-9z" fill="#c01010"/><path d="M258 219l43 23-40 19q-8-20-3-42z" fill="#d42424"/>
        <path d="M196 223l-50 9 3 15 48-10z" fill="#15157a"/><path d="M113 250l22-25q20 4 18 32l-20 7z" fill="#1616c8"/>
        <text class="ax-y" x="171" y="90">Y</text><text class="ax-x" x="292" y="261">X</text><text class="ax-z" x="88" y="270">Z</text>
      </svg>

      <div class="hud">
        <button aria-label="整屏显示全图"><svg><use href="#zoom-fit"/></svg></button><button aria-label="局部放大"><svg><use href="#zoom-area"/></svg></button><button aria-label="上一视图"><svg><use href="#prev-view"/></svg></button><button aria-label="剖面视图"><svg><use href="#section"/></svg></button><button aria-label="视图定向"><svg><use href="#orient"/></svg></button><button class="dd" aria-label="视图定向选项"><svg><use href="#caret"/></svg></button><button aria-label="显示样式"><svg><use href="#cube"/></svg></button><button class="dd" aria-label="显示样式选项"><svg><use href="#caret"/></svg></button><button aria-label="隐藏/显示"><svg><use href="#eye"/></svg></button><button class="dd" aria-label="隐藏选项"><svg><use href="#caret"/></svg></button><button aria-label="编辑外观"><svg><use href="#edit-look"/></svg></button><button aria-label="应用布景"><svg><use href="#scene"/></svg></button><button class="dd" aria-label="布景选项"><svg><use href="#caret"/></svg></button><button aria-label="视图设定"><svg><use href="#monitor"/></svg></button><button class="dd" aria-label="视图设定选项"><svg><use href="#caret"/></svg></button>
      </div>

      <div class="winctl doc">
        <button aria-label="左侧窗格"><svg viewBox="0 0 28 28"><path d="M2.500 2v24.500h23V2z" fill="none" stroke="currentColor"/><path d="M2 1h24v4H2zM3 15l5-5v10z" fill="currentColor"/></svg></button>
        <button aria-label="右侧窗格"><svg viewBox="0 0 28 28"><path d="M2.500 2v24.500h23V2z" fill="none" stroke="currentColor"/><path d="M2 1h24v4H2zM25 15l-5-5v10z" fill="currentColor"/></svg></button>
        <button aria-label="最小化文档"><svg viewBox="0 0 28 28"><path d="M3 23h22v4H3z" fill="currentColor"/></svg></button>
        <button aria-label="还原文档"><svg viewBox="0 0 28 28"><path d="M10 12V4h16v13h-8M1.500 12v13h17V12z" fill="none" stroke="currentColor"/><path d="M9 3h18v3H9zM1 11h18v3H1z" fill="currentColor"/></svg></button>
        <button aria-label="关闭文档"><svg><use href="#close"/></svg></button>
      </div>

      <div class="taskpane">
        <button aria-label="资源"><svg><use href="#home"/></svg></button><button aria-label="设计库"><svg><use href="#books"/></svg></button><button aria-label="文件探索器"><svg><use href="#files"/></svg></button><button aria-label="视图调色板"><svg><use href="#palette"/></svg></button><button class="active" aria-label="外观、布景和贴图"><svg class="ball"><use href="#sphere"/></svg></button><button aria-label="自定义属性"><svg><use href="#window-list"/></svg></button><button aria-label="论坛"><svg><use href="#chat"/></svg></button>
      </div>
      <button class="handle" aria-label="折叠面板"><i class="knob"></i></button>
    </section>
  </main>
</div>
</body>
</html>
```
FILE: styles.css
```
* { box-sizing: border-box; }
body {
  margin: 0;
  font-family: "Noto Sans", "Noto Sans CJK SC", sans-serif;
  font-size: 18px;
  color: #111;
  background: #f7f7f7;
}
button {
  margin: 0;
  padding: 0;
  border: 0;
  background: none;
  font: inherit;
  color: inherit;
}
svg { display: block; flex: none; }
.defs { position: absolute; width: 0; height: 0; }

.app {
  display: flex;
  flex-direction: column;
  height: 100vh;
  overflow: hidden;
  border-top: 3px solid #fff;
  border-left: 1px solid #1883d7;
}

/* title bar */
.topbar {
  display: flex;
  flex: none;
  height: 56px;
  border-bottom: 1px solid #808080;
}
.brand {
  position: relative;
  z-index: 1;
  display: flex;
  align-items: flex-start;
  width: 221px;
  height: 60px;
  margin-left: 10px;
  padding: 8px 10px;
  gap: 7px;
  border: 1px solid #909090;
  border-top: 0;
  background: linear-gradient(165deg, #fff 45%, #d4d4d4 60%, #e6e6e6);
  box-shadow: inset 0 0 0 2px #fff;
}
.brand-mark { width: 42px; height: 40px; }
.brand-name {
  padding-top: 14px;
  font-size: 24px;
  line-height: 24px;
  font-style: italic;
  font-weight: 400;
  color: #d9261c;
}
.brand-name b { font-weight: 800; }
.menu { display: flex; gap: 16px; margin-left: 28px; font-size: 17px; white-space: nowrap; }
.menu button { height: 56px; }
.menu .latin { font-size: 16px; }
.pin { margin: 0 10px 0 auto; height: 38px; align-self: flex-start; padding-top: 17px; }
.pin svg { width: 20px; height: 20px; }
.quick {
  display: flex;
  align-items: center;
  flex: none;
  padding-left: 16px;
  border-left: 3px solid #b4b4b4;
}
.q { display: flex; justify-content: center; width: 38px; }
.q svg { width: 38px; height: 38px; }
.q.home { margin-right: 4px; }
.q.wide { width: 46px; }
.dd { display: flex; align-items: center; justify-content: center; width: 21px; color: #333; }
.dd svg { width: 10px; height: 6px; }
.dd:disabled { color: #999; }
.select-tool { display: flex; height: 46px; border: 1px solid #888; }
.select-tool .q { align-items: center; background: #b0b0b0; border-right: 1px solid #888; }
.outline-gear { fill: #e6e6e6; stroke: #333; stroke-width: 1.4; }
.docname { margin: 0 10px 0 10px; font-size: 17px; }
.help { width: 32px; margin: 0 1px 0 4px; font-size: 36px; line-height: 46px; font-weight: 700; color: #444; }
.winctl { display: flex; color: #444; }
.winctl button { display: flex; align-items: center; justify-content: center; width: 46px; height: 46px; }
.winctl svg { width: 28px; height: 28px; }

/* ribbon */
.ribbon { display: flex; flex: none; height: 146px; padding: 6px 0 2px 3px; }
.group { display: flex; }
.group + .group { margin-left: 1px; padding-left: 1px; border-left: 1px solid #c0c0c0; }
.tool {
  display: flex;
  flex-direction: column;
  align-items: center;
  width: 50px;
  padding-top: 13px;
  font-size: 18px;
  line-height: 23px;
  color: #000;
}
.tool svg { width: 38px; height: 38px; margin-bottom: 2px; }
.tool:disabled { color: #b8b8b8; }

/* work area */
.work {
  display: grid;
  flex: 1;
  min-height: 0;
  grid-template-columns: 502px 1fr;
  grid-template-rows: 33px minmax(0, 1fr);
  border-top: 1px solid #808080;
}
.tabs {
  z-index: 1;
  grid-area: 1 / 1 / 2 / 3;
  justify-self: start;
  display: flex;
  height: 33px;
  font-size: 17px;
  line-height: 32px;
  white-space: nowrap;
}
.tabs button {
  padding: 0 12px;
  border-right: 1px solid #808080;
  border-bottom: 1px solid #808080;
  background: #d4d4d4;
  color: #222;
}
.tabs .han { padding: 0 9px; font-size: 19px; }
.tabs .snug { padding: 0 9px; }
.tabs .roomy { padding: 0 14px; }
.tabs .active { background: #f7f7f7; border-bottom-color: #f7f7f7; color: #444; }
.big-han { font-size: 19px; }

/* feature manager */
.side {
  grid-area: 2 / 1 / 3 / 2;
  display: flex;
  flex-direction: column;
  min-height: 0;
  padding: 6px 2px 0 1px;
  border-right: 1px solid #808080;
  background: #f7f7f7;
}
.side-tabs {
  position: relative;
  display: flex;
  flex: none;
  height: 46px;
  padding-left: 1px;
  overflow: hidden;
  border-top: 1px solid #808080;
  border-bottom: 1px solid #808080;
  background: #d4d4d4;
}
.side-tabs > button {
  display: flex;
  align-items: center;
  justify-content: center;
  flex: none;
  width: 60px;
  border-right: 1px solid #808080;
}
.side-tabs > .active { background: #f7f7f7; margin-bottom: -1px; }
.side-tabs svg { width: 36px; height: 36px; }
.side-tabs .big { width: 40px; height: 40px; }
.pager { position: absolute; right: -1px; bottom: 0; display: flex; }
.pager button {
  width: 24px;
  height: 23px;
  border: 1px solid #b0b0b0;
  background: #f7f7f7;
  font-family: "DejaVu Sans", sans-serif;
  font-size: 16px;
  line-height: 20px;
}
.filter {
  display: flex;
  align-items: center;
  gap: 3px;
  flex: none;
  height: 37px;
  margin: 1px 2px 0 4px;
  padding-left: 5px;
  border: 1px solid #c4c4c4;
}
.filter .fun { width: 27px; height: 28px; }
.filter .car { width: 7px; height: 5px; }
.tree-wrap { display: flex; flex: 1; min-height: 0; }
.tree {
  flex: 1;
  min-width: 0;
  margin: 0;
  padding: 0;
  overflow: hidden;
  list-style: none;
  color: #000;
}
.tree li {
  position: relative;
  display: flex;
  align-items: center;
  gap: 6px;
  height: 32px;
  padding-left: 39px;
  white-space: nowrap;
}
.tree .root { padding-left: 5px; gap: 5px; }
.tree svg { width: 28px; height: 28px; }
.state {
  font-family: "Inter", "Noto Sans CJK SC", sans-serif;
  font-variant-ligatures: none;
  font-feature-settings: "calt" 0;
}
.exp::before {
  content: "";
  position: absolute;
  left: 14px;
  top: 10px;
  border: 6px solid transparent;
  border-left-color: #606060;
  border-right: 0;
}
.vbar {
  display: flex;
  flex-direction: column;
  align-items: center;
  width: 24px;
  padding: 11px 0 9px;
  background: #f0f0f0;
}
.vbar svg, .hbar svg { fill: none; stroke: #505050; stroke-width: 2; }
.vbar svg { width: 12px; height: 8px; }
.vtrack { flex: 1; width: 24px; margin: 7px 0; }
.vthumb { height: 89%; background: #a6a6a6; }
.hbar {
  display: flex;
  align-items: center;
  flex: none;
  height: 24px;
  margin-top: 1px;
  padding: 0 33px 0 8px;
  background: #f0f0f0;
}
.hbar svg { width: 9px; height: 12px; }
.hthumb { flex: 1; height: 24px; margin: 0 18px 0 9px; background: #cdcdcd; }
.splitter {
  display: flex;
  align-items: center;
  justify-content: center;
  flex: none;
  height: 27px;
  margin-top: 2px;
  border-top: 1px solid #c4c4c4;
  border-bottom: 1px solid #c4c4c4;
}
.knob {
  display: block;
  flex: none;
  width: 10px;
  height: 10px;
  border: 1px solid #888;
  border-radius: 50%;
  background: #d4d4d4;
}
.stub { flex: none; align-self: center; width: 10px; height: 2px; margin-top: 2px; background: #bbb; }

/* graphics area */
.view {
  position: relative;
  grid-area: 1 / 2 / 3 / 3;
  overflow: hidden;
  background: linear-gradient(#80ffff, #ff8080);
}
.model { position: absolute; left: calc(50% - 221px); bottom: 0; width: 450px; height: 535px; }
.plate { font-size: 27px; font-weight: 900; fill: #222; }
.triad {
  position: absolute;
  left: 0;
  bottom: 55px;
  width: 127px;
  height: 100px;
  font-family: "Liberation Serif", serif;
  font-size: 48px;
}
.ax-y { fill: #0c8a0c; }
.ax-x { fill: #f00; }
.ax-z { fill: #00f; }
.hud {
  display: flex;
  justify-content: center;
  padding-top: 39px;
  padding-right: 5px;
  opacity: .72;
}
.hud button { display: flex; align-items: center; justify-content: center; width: 46px; }
.hud svg { width: 38px; height: 38px; }
.hud .dd { width: 20px; color: #7c8c8c; }
.hud .dd svg { width: 10px; height: 6px; }
.doc { position: absolute; top: 2px; right: 6px; color: #66a2a4; }
.taskpane {
  position: absolute;
  top: 109px;
  right: 0;
  border: 1px solid #808080;
  border-top: 0;
  border-right: 0;
}
.taskpane button {
  display: flex;
  align-items: center;
  justify-content: center;
  width: 57px;
  height: 54px;
  border-top: 1px solid #808080;
  background: #d4d4d4;
}
.taskpane .active { background: #f7f7f7; }
.taskpane svg { width: 38px; height: 38px; }
.taskpane .ball { width: 42px; height: 42px; }
.handle {
  position: absolute;
  left: 0;
  top: 340px;
  display: flex;
  align-items: center;
  width: 13px;
  height: 60px;
  border: 1px solid #808080;
  border-left: 0;
  background: #f7f7f7;
}
```
